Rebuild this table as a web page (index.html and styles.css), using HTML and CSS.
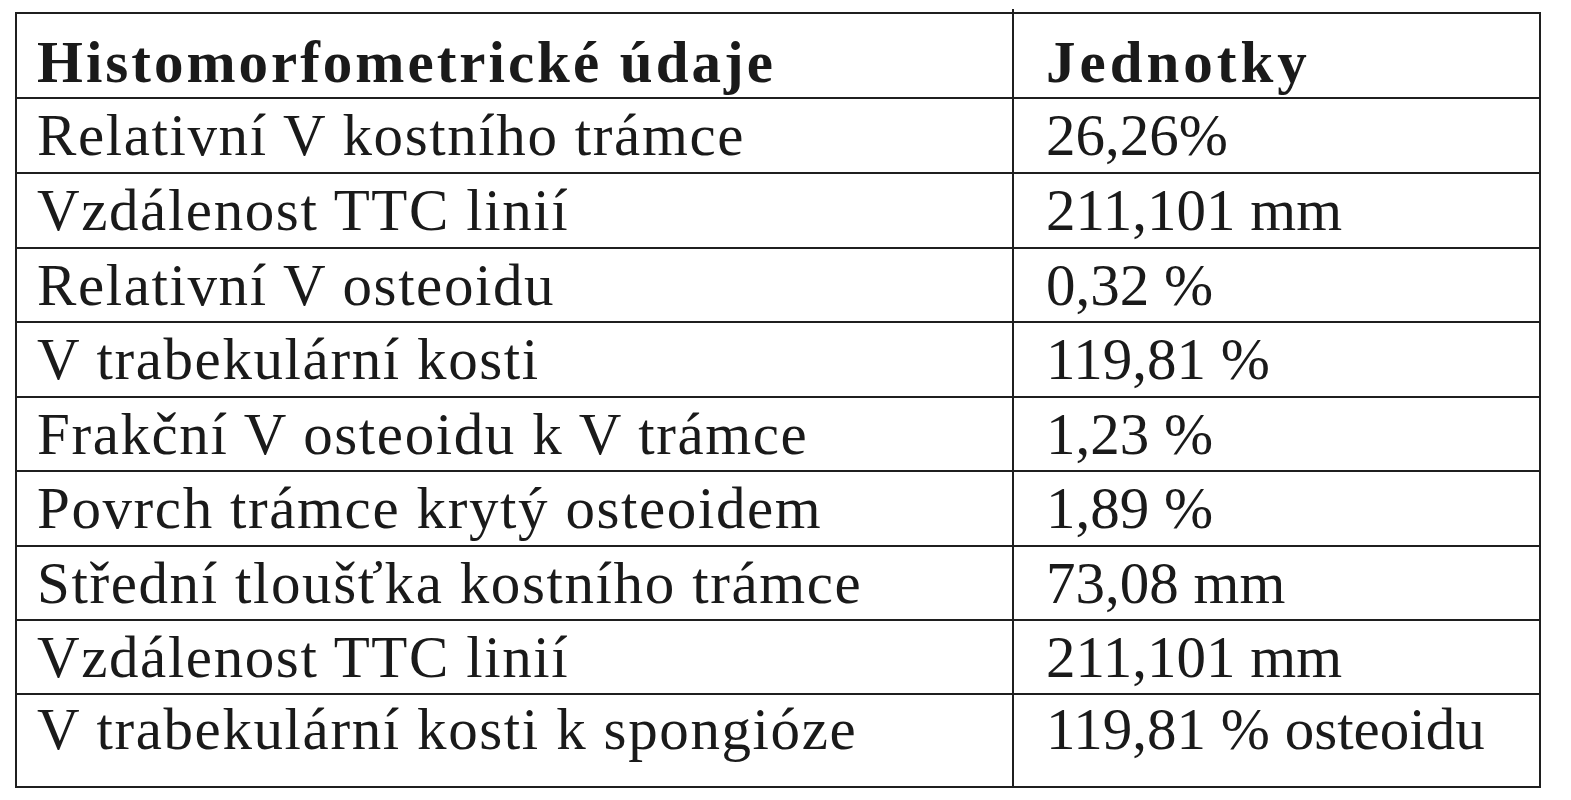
FILE: index.html
```html
<!DOCTYPE html>
<html lang="cs">
<head>
<meta charset="utf-8">
<title>Histomorfometrické údaje</title>
<link rel="stylesheet" href="styles.css">
</head>
<body>
<table class="data">
  <colgroup><col class="c1"><col class="c2"></colgroup>
  <thead>
    <tr class="head"><th>Histomorfometrické údaje</th><th class="unit">Jednotky</th></tr>
  </thead>
  <tbody>
    <tr class="r73"><td>Relativní V kostního trámce</td><td class="unit">26,26%</td></tr>
    <tr class="r73"><td>Vzdálenost TTC linií</td><td class="unit">211,101 mm</td></tr>
    <tr class="r72"><td>Relativní V osteoidu</td><td class="unit">0,32 %</td></tr>
    <tr class="r73"><td>V trabekulární kosti</td><td class="unit">119,81 %</td></tr>
    <tr class="r72"><td>Frakční V osteoidu k V trámce</td><td class="unit">1,23 %</td></tr>
    <tr class="r73"><td>Povrch trámce krytý osteoidem</td><td class="unit">1,89 %</td></tr>
    <tr class="r72"><td>Střední tloušťka kostního trámce</td><td class="unit">73,08 mm</td></tr>
    <tr class="r72"><td>Vzdálenost TTC linií</td><td class="unit">211,101 mm</td></tr>
    <tr class="last"><td>V trabekulární kosti k spongióze</td><td class="unit">119,81 % osteoidu</td></tr>
  </tbody>
</table>
</body>
</html>
```
FILE: styles.css
```css
html, body {
  margin: 0;
  padding: 0;
  background: #ffffff;
}

body {
  padding: 12px 0 0 15px;
}

.data {
  border-collapse: separate;
  border-spacing: 2px;
  background: #1f1f1f;
  table-layout: fixed;
  width: 1526px;
  font-family: "Liberation Serif", "Times New Roman", serif;
  font-size: 59px;
  color: #1a1a1a;
}

.c1 { width: 995px; }
.c2 { width: 525px; }

.data th,
.data td {
  background: #ffffff;
  box-sizing: border-box;
  padding: 0 0 0 20px;
  vertical-align: top;
  text-align: left;
  white-space: nowrap;
  letter-spacing: 1.6px;
}

.data th {
  font-weight: bold;
  height: 83px;
  line-height: 69px;
  padding-top: 14px;
  letter-spacing: 3px;
}

.data .unit {
  padding-left: 32px;
  letter-spacing: 0;
}

.data th.unit {
  position: relative;
  letter-spacing: 4px;
}

.data th.unit::before {
  content: "";
  position: absolute;
  left: -2px;
  top: -5px;
  width: 2px;
  height: 5px;
  background: #1f1f1f;
}

.r72 td {
  height: 72px;
  line-height: 72px;
}

.r73 td {
  height: 73px;
  line-height: 73px;
}

.last td {
  height: 91px;
  line-height: 68px;
  padding-bottom: 23px;
}
```
